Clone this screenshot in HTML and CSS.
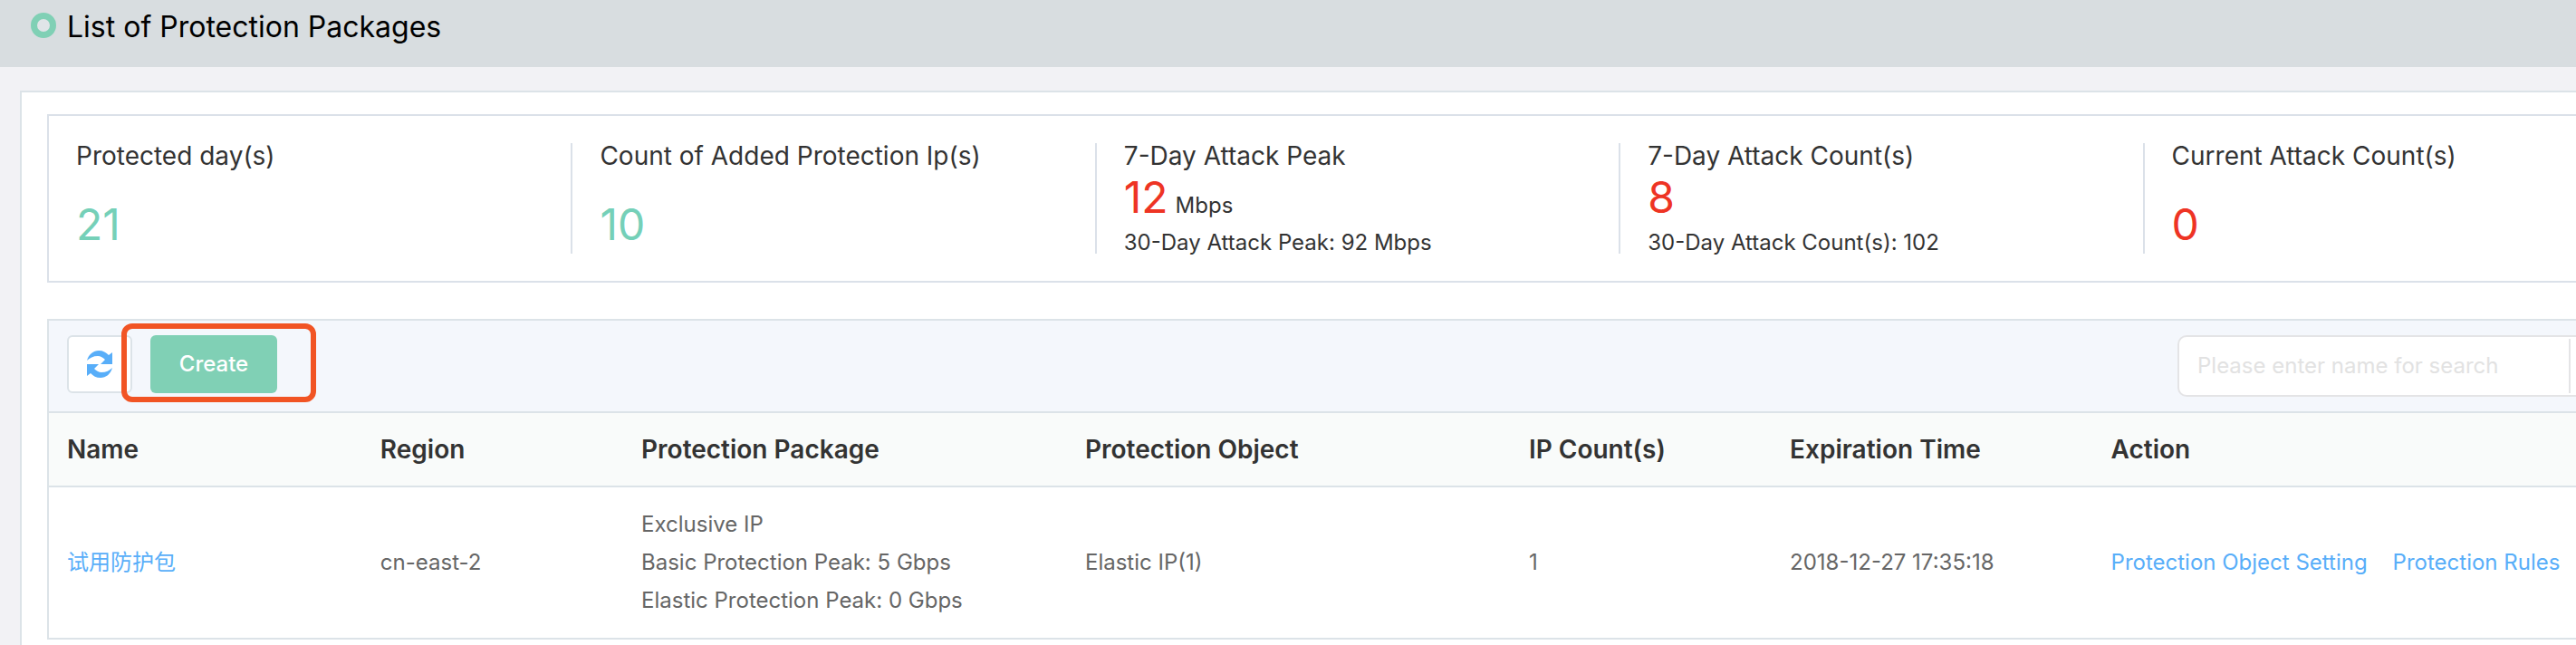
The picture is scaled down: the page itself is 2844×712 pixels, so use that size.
FILE: index.html
```html
<!DOCTYPE html>
<html lang="en">
<head>
<meta charset="utf-8">
<title>List of Protection Packages</title>
<link rel="stylesheet" href="styles.css">
</head>
<body>
<header class="page-header">
  <span class="ring" aria-hidden="true"></span>
  <h1 class="page-title">List of Protection Packages</h1>
</header>
<main class="panel">
  <section class="stats" aria-label="Summary">
    <div class="stat">
      <h2 class="stat-label">Protected day(s)</h2>
      <p class="stat-value stat-value-single">21</p>
    </div>
    <div class="stat">
      <h2 class="stat-label">Count of Added Protection Ip(s)</h2>
      <p class="stat-value stat-value-single">10</p>
    </div>
    <div class="stat">
      <h2 class="stat-label">7-Day Attack Peak</h2>
      <p class="stat-value alert">12 <span class="unit">Mbps</span></p>
      <p class="stat-note">30-Day Attack Peak: 92 Mbps</p>
    </div>
    <div class="stat">
      <h2 class="stat-label">7-Day Attack Count(s)</h2>
      <p class="stat-value alert">8</p>
      <p class="stat-note">30-Day Attack Count(s): 102</p>
    </div>
    <div class="stat">
      <h2 class="stat-label">Current Attack Count(s)</h2>
      <p class="stat-value stat-value-single alert">0</p>
    </div>
  </section>

  <section class="packages" aria-label="Packages">
    <div class="toolbar">
      <button class="refresh" type="button" aria-label="Refresh">
        <svg class="refresh-icon" viewBox="0 0 28 30" aria-hidden="true">
          <path d="M0 11C2 4 7 0 13 0c5 0 8 2 11 5l4-3v13H15l5-5c-2-2-5-4-8-4-5 0-9 2-12 5z"/>
          <path d="M28 19c-2 7-7 11-13 11-5 0-8-2-11-5l-4 3V15h13l-5 5c2 2 5 4 8 4 5 0 9-2 12-5z"/>
        </svg>
      </button>
      <div class="create-wrap">
        <button class="create" type="button">Create</button>
      </div>
      <form class="search">
        <input class="search-input" type="text" aria-label="Search by name" placeholder="Please enter name for search">
        <button class="search-button" type="button" aria-label="Search"></button>
      </form>
    </div>
    <table class="table">
      <colgroup>
        <col class="col-name"><col class="col-count"><col class="col-wide"><col class="col-wide"><col class="col-count"><col class="col-time"><col>
      </colgroup>
      <thead>
        <tr>
          <th scope="col">Name</th>
          <th scope="col">Region</th>
          <th scope="col">Protection Package</th>
          <th scope="col">Protection Object</th>
          <th scope="col">IP Count(s)</th>
          <th scope="col">Expiration Time</th>
          <th scope="col">Action</th>
        </tr>
      </thead>
      <tbody>
        <tr>
          <td><a class="link" href="#package">试用防护包</a></td>
          <td>cn-east-2</td>
          <td>Exclusive IP<br>Basic Protection Peak: 5 Gbps<br>Elastic Protection Peak: 0 Gbps</td>
          <td>Elastic IP(1)</td>
          <td>1</td>
          <td>2018-12-27 17:35:18</td>
          <td><div class="actions"><a class="link" href="#objects">Protection Object Setting</a><a class="link" href="#rules">Protection Rules</a></div></td>
        </tr>
      </tbody>
    </table>
  </section>
</main>
</body>
</html>
```
FILE: styles.css
```css
* {
  box-sizing: border-box;
}

body {
  margin: 0;
  min-height: 100vh;
  display: flex;
  flex-direction: column;
  overflow: hidden;
  background: #f2f2f5;
  color: #333;
  font-family: Inter, "Noto Sans CJK SC", sans-serif;
  font-size: 24px;
}

h1, h2, p {
  margin: 0;
  font-weight: 400;
}

.page-header {
  display: flex;
  align-items: flex-start;
  gap: 12px;
  padding: 14px 34px 28px;
  background: #d8dde0;
}

.ring {
  width: 28px;
  height: 28px;
  border: 7px solid #80d0b5;
  border-radius: 50%;
  background: #e0e5e8;
}

.page-title {
  color: #000;
  font-size: 32px;
  line-height: 32px;
}

/* The panel continues past the right edge of the window. */
.panel {
  flex: 1;
  margin: 26px -134px 0 22px;
  padding: 24px 28px 0;
  border: 2px solid #dce3e8;
  border-bottom: 0;
  background: #fff;
}

.stats {
  display: grid;
  grid-template-columns: repeat(5, 1fr);
  padding: 30px 0;
  border: 2px solid #dbe1e9;
}

.stat {
  min-height: 122px;
  padding-left: 30px;
  border-right: 2px solid #dbe1e9;
}

.stat:last-child {
  border-right: 0;
}

.stat-label {
  font-size: 28px;
  line-height: 28px;
}

.stat-value {
  display: flex;
  align-items: baseline;
  gap: 8px;
  margin-top: 8px;
  color: #75d0b8;
  font-size: 48px;
  line-height: 48px;
}

.stat-value-single {
  margin-top: 38px;
}

.alert {
  color: #ee3424;
}

.unit {
  color: #333;
  font-size: 24px;
  line-height: 24px;
}

.stat-note {
  margin-top: 14px;
  line-height: 24px;
}

.packages {
  margin: 40px 10px 0 0;
  border: 2px solid #dce3e8;
  border-bottom: 0;
}

.toolbar {
  display: flex;
  align-items: flex-start;
  gap: 20px;
  padding: 16px 20px;
  background: #f4f7fc;
}

.refresh {
  display: grid;
  place-items: center;
  width: 72px;
  height: 64px;
  padding: 0;
  border: 2px solid #dce3e8;
  border-radius: 6px;
  background: #fff;
}

.refresh-icon {
  width: 28px;
  height: 30px;
  fill: #58aef9;
}

.create-wrap {
  position: relative;
}

/* Highlight frame around the Create button */
.create-wrap::after {
  content: "";
  position: absolute;
  inset: -13px -43px -10px -32px;
  border: 6px solid #f15424;
  border-radius: 12px;
  pointer-events: none;
}

.create {
  width: 140px;
  height: 64px;
  padding: 0;
  border: 0;
  border-radius: 6px;
  background: #80d0b5;
  color: #fff;
  font: 500 24px/24px Inter, sans-serif;
}

.search {
  display: flex;
  align-items: center;
  width: 512px;
  height: 68px;
  margin-left: auto;
  border: 2px solid #e4e4e6;
  border-radius: 10px;
  background: #fff;
}

.search-input {
  flex: 1;
  min-width: 0;
  padding: 0 20px;
  border: 0;
  outline: 0;
  background: transparent;
  font: 24px/60px Inter, sans-serif;
}

.search-input::placeholder {
  color: #e2e2e2;
}

.search-button {
  width: 78px;
  height: 60px;
  border: 0;
  border-left: 2px solid #e4e4e6;
  background: transparent;
}

.table {
  width: 100%;
  table-layout: fixed;
  border-collapse: separate;
  border-spacing: 0;
  border-top: 2px solid #dce3e8;
}

.col-name {
  width: 12%;
}

.col-count {
  width: 10%;
}

.col-wide {
  width: 17%;
}

.col-time {
  width: 12.3%;
}

.table th {
  padding: 20px;
  border-bottom: 2px solid #dce3e8;
  background: #f9fbfa;
  font-size: 28px;
  font-weight: 600;
  line-height: 40px;
  text-align: left;
}

.table td {
  padding: 20px;
  border-bottom: 2px solid #dce3e8;
  color: #666;
  line-height: 42px;
  vertical-align: middle;
}

.actions {
  display: flex;
  gap: 28px;
}

.link {
  color: #58aef9;
  text-decoration: none;
}
```
